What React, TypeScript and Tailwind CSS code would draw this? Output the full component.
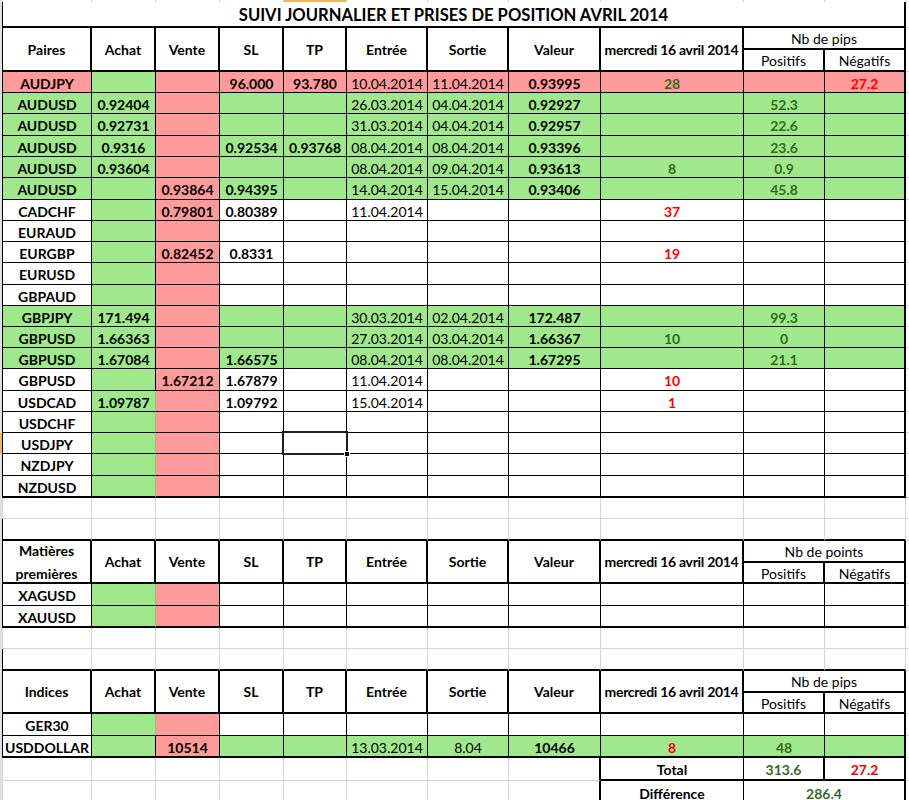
import React from 'react';

const G = 'bg-[#9fe98c]';
const P = 'bg-[#ff9a9a]';
const WCLS = [
  'w-[89px]', 'w-[64px]', 'w-[64px]', 'w-[64px]', 'w-[63px]', 'w-[81px]',
  'w-[81px]', 'w-[92px]', 'w-[143px]', 'w-[81px]', 'w-[81px]',
];

type C = { t?: string; bg?: string; b?: boolean; c?: 'g' | 'r' };
type RowT = { h: string; cells: C[]; light?: boolean; sel?: boolean; thick?: boolean };

const green = 'text-[#356a1c]';
const red = 'text-[#ff0000]';

function mk(
  name: string,
  paireBg: string,
  vals: (string | undefined)[],
  bgs: string[],
  merc?: { t: string; c: 'g' | 'r' },
  pos?: string,
  neg?: string,
): C[] {
  const cells: C[] = [];
  cells.push({ t: name, bg: paireBg, b: true });
  const boldIdx = [true, true, true, true, false, false, true];
  for (let i = 0; i < 7; i++) cells.push({ t: vals[i], bg: bgs[i], b: boldIdx[i] });
  cells.push({ t: merc?.t, bg: bgs[7], b: true, c: merc?.c });
  cells.push({ t: pos, bg: bgs[8], b: true, c: 'g' });
  cells.push({ t: neg, bg: bgs[9], b: true, c: 'r' });
  return cells;
}

const W = 'bg-white';
const allG = [G, P, G, G, G, G, G, G, G, G];
const plain = [G, P, W, W, W, W, W, W, W, W];

const table1: RowT[] = [
  { h: 'h-[21px]', cells: mk('AUDJPY', P, [undefined, undefined, '96.000', '93.780', '10.04.2014', '11.04.2014', '0.93995'], [G, P, P, P, P, P, P, P, P, P], { t: '28', c: 'g' }, undefined, '27.2') },
  { h: 'h-[21px]', cells: mk('AUDUSD', G, ['0.92404', undefined, undefined, undefined, '26.03.2014', '04.04.2014', '0.92927'], allG, undefined, '52.3') },
  { h: 'h-[22px]', cells: mk('AUDUSD', G, ['0.92731', undefined, undefined, undefined, '31.03.2014', '04.04.2014', '0.92957'], allG, undefined, '22.6') },
  { h: 'h-[21px]', cells: mk('AUDUSD', G, ['0.9316', undefined, '0.92534', '0.93768', '08.04.2014', '08.04.2014', '0.93396'], allG, undefined, '23.6') },
  { h: 'h-[21px]', cells: mk('AUDUSD', G, ['0.93604', undefined, undefined, undefined, '08.04.2014', '09.04.2014', '0.93613'], allG, { t: '8', c: 'g' }, '0.9') },
  { h: 'h-[22px]', cells: mk('AUDUSD', G, [undefined, '0.93864', '0.94395', undefined, '14.04.2014', '15.04.2014', '0.93406'], allG, undefined, '45.8') },
  { h: 'h-[21px]', cells: mk('CADCHF', W, [undefined, '0.79801', '0.80389', undefined, '11.04.2014', undefined, undefined], plain, { t: '37', c: 'r' }) },
  { h: 'h-[21px]', cells: mk('EURAUD', W, [], plain) },
  { h: 'h-[21px]', cells: mk('EURGBP', W, [undefined, '0.82452', '0.8331'], plain, { t: '19', c: 'r' }) },
  { h: 'h-[22px]', cells: mk('EURUSD', W, [], plain) },
  { h: 'h-[21px]', cells: mk('GBPAUD', W, [], plain) },
  { h: 'h-[21px]', cells: mk('GBPJPY', G, ['171.494', undefined, undefined, undefined, '30.03.2014', '02.04.2014', '172.487'], allG, undefined, '99.3') },
  { h: 'h-[21px]', cells: mk('GBPUSD', G, ['1.66363', undefined, undefined, undefined, '27.03.2014', '03.04.2014', '1.66367'], allG, { t: '10', c: 'g' }, '0') },
  { h: 'h-[21px]', cells: mk('GBPUSD', G, ['1.67084', undefined, '1.66575', undefined, '08.04.2014', '08.04.2014', '1.67295'], allG, undefined, '21.1') },
  { h: 'h-[22px]', cells: mk('GBPUSD', W, [undefined, '1.67212', '1.67879', undefined, '11.04.2014'], plain, { t: '10', c: 'r' }) },
  { h: 'h-[21px]', light: true, cells: mk('USDCAD', W, ['1.09787', undefined, '1.09792', undefined, '15.04.2014'], plain, { t: '1', c: 'r' }) },
  { h: 'h-[21px]', light: true, cells: mk('USDCHF', W, [], plain) },
  { h: 'h-[21px]', light: true, sel: true, cells: mk('USDJPY', W, [], plain) },
  { h: 'h-[22px]', light: true, cells: mk('NZDJPY', W, [], plain) },
  { h: 'h-[22px]', light: true, thick: true, cells: mk('NZDUSD', W, [], plain) },
];

const table2: RowT[] = [
  { h: 'h-[22px]', light: true, cells: mk('XAGUSD', W, [], plain) },
  { h: 'h-[22px]', light: true, thick: true, cells: mk('XAUUSD', W, [], plain) },
];

const table3: RowT[] = [
  { h: 'h-[22px]', light: true, cells: mk('GER30', W, [], plain) },
  { h: 'h-[22px]', thick: true, cells: mk('USDDOLLAR', W, [undefined, '10514', undefined, undefined, '13.03.2014', '8.04', '10466'], allG, { t: '8', c: 'r' }, '48') },
];

function Gutter({ sel }: { sel?: boolean }) {
  return <div className={`w-[2px] shrink-0 ${sel ? 'bg-[#f2b45c]' : 'bg-[#dde1e6]'}`} />;
}

function DataRow({ row }: { row: RowT }) {
  return (
    <div className={`flex ${row.h}`}>
      <Gutter sel={row.sel} />
      <div className="w-px shrink-0 bg-black" />
      {row.cells.map((c, i) => {
        const rb =
          i === 10
            ? 'border-r-2 border-r-black'
            : i === 1 && row.light
            ? 'border-r border-r-[#7fcf6e]'
            : 'border-r border-r-black';
        const bb = row.thick ? 'border-b-2 border-b-black' : 'border-b border-b-black';
        const col = c.c === 'g' ? green : c.c === 'r' ? red : 'text-black';
        return (
          <div
            key={i}
            className={`${WCLS[i]} shrink-0 box-border flex items-center justify-center whitespace-nowrap pt-[2px] ${rb} ${bb} ${c.bg ?? 'bg-white'} ${col} ${c.b ? 'font-bold' : 'font-normal'}`}
          >
            {c.t}
          </div>
        );
      })}
      <div className="flex-1 border-b border-b-[#d4d4d4]" />
    </div>
  );
}

function GapRow({ h, black }: { h: string; black?: boolean }) {
  return (
    <div className={`flex ${h}`}>
      <Gutter />
      <div className={`w-px shrink-0 ${black ? 'bg-black' : 'bg-[#d4d4d4]'}`} />
      {WCLS.map((w, i) => (
        <div
          key={i}
          className={`${w} shrink-0 box-border border-r border-r-[#d4d4d4] ${black ? 'border-b-2 border-b-black' : 'border-b border-b-[#d4d4d4]'}`}
        />
      ))}
      <div className="flex-1 border-b border-b-[#d4d4d4]" />
    </div>
  );
}

function Header({ first, nb, h, h1, h2 }: { first: React.ReactNode; nb: string; h: string; h1: string; h2: string }) {
  const labels = ['Achat', 'Vente', 'SL', 'TP', 'Entrée', 'Sortie', 'Valeur'];
  return (
    <div className={`flex ${h}`}>
      <Gutter />
      <div className="w-px shrink-0 bg-black" />
      <div className={`${WCLS[0]} shrink-0 box-border flex items-center justify-center text-center font-bold border-r-2 border-r-black border-b-2 border-b-black bg-white`}>
        {first}
      </div>
      {labels.map((l, i) => (
        <div
          key={l}
          className={`${WCLS[i + 1]} shrink-0 box-border flex items-center justify-center font-bold border-r-2 border-r-black border-b-2 border-b-black bg-white`}
        >
          {l}
        </div>
      ))}
      <div className={`${WCLS[8]} shrink-0 box-border flex items-center justify-center whitespace-nowrap font-bold tracking-[-0.3px] border-r-2 border-r-black border-b-2 border-b-black bg-white`}>
        mercredi 16 avril 2014
      </div>
      <div className="w-[162px] shrink-0 flex flex-col">
        <div className={`${h1} box-border flex items-center justify-center pt-[1px] border-r-2 border-r-black border-b-2 border-b-black bg-white`}>
          {nb}
        </div>
        <div className={`flex ${h2}`}>
          <div className="w-[81px] shrink-0 box-border flex items-center justify-center pt-[1px] border-r-2 border-r-black border-b-2 border-b-black bg-white">
            Positifs
          </div>
          <div className="w-[81px] shrink-0 box-border flex items-center justify-center pt-[1px] border-r-2 border-r-black border-b-2 border-b-black bg-white">
            Négatifs
          </div>
        </div>
      </div>
      <div className="flex-1 border-b border-b-[#d4d4d4]" />
    </div>
  );
}

function TotalRow({ h, label, children, diff }: { h: string; label: string; children: React.ReactNode; diff?: boolean }) {
  return (
    <div className={`flex ${h}`}>
      <Gutter />
      <div className="w-px shrink-0 bg-[#d4d4d4]" />
      {WCLS.slice(0, 8).map((w, i) => (
        <div
          key={i}
          className={`${w} shrink-0 box-border border-b border-b-[#d4d4d4] ${i === 7 ? 'border-r-2 border-r-black' : 'border-r border-r-[#d4d4d4]'}`}
        />
      ))}
      <div className={`${WCLS[8]} shrink-0 box-border flex items-center justify-center pt-[2px] font-bold bg-white border-r border-r-black ${diff ? '' : 'border-b-2 border-b-black'}`}>
        {label}
      </div>
      {children}
      <div className="flex-1 border-b border-b-[#d4d4d4]" />
    </div>
  );
}

export default function App() {
  return (
    <div className="relative w-[909px] h-[800px] overflow-hidden bg-white text-[14px] text-black [font-family:Lato,'Liberation_Sans',sans-serif]">
      <div className="flex h-[2px]">
        <div className="w-[3px] shrink-0 bg-[#dde1e6]" />
        {WCLS.map((w, i) => (
          <div key={i} className={`${w} shrink-0 box-border border-r border-r-[#d4d4d4] ${i === 4 ? 'bg-[#f2b45c]' : 'bg-white'}`} />
        ))}
      </div>
      <div className="flex h-[26px]">
        <Gutter />
        <div className="w-px shrink-0 bg-black" />
        <div className="w-[903px] shrink-0 box-border flex items-center justify-center pt-[3px] font-bold text-[16.6px] border-r-2 border-r-black border-b-2 border-b-black bg-white">
          SUIVI JOURNALIER ET PRISES DE POSITION AVRIL 2014
        </div>
        <div className="flex-1 border-b border-b-[#d4d4d4]" />
      </div>

      <Header first="Paires" nb="Nb de pips" h="h-[44px]" h1="h-[22px]" h2="h-[22px]" />
      {table1.map((r, i) => (
        <DataRow key={i} row={r} />
      ))}

      <GapRow h="h-[21px]" />
      <GapRow h="h-[22px]" black />

      <Header
        first={
          <span className="leading-[23px] pt-[1px]">
            Matières
            <br />
            premières
          </span>
        }
        nb="Nb de points"
        h="h-[43px]"
        h1="h-[22px]"
        h2="h-[21px]"
      />
      {table2.map((r, i) => (
        <DataRow key={i} row={r} />
      ))}

      <GapRow h="h-[21px]" />
      <GapRow h="h-[22px]" black />

      <Header first="Indices" nb="Nb de pips" h="h-[43px]" h1="h-[22px]" h2="h-[21px]" />
      {table3.map((r, i) => (
        <DataRow key={i} row={r} />
      ))}

      <TotalRow h="h-[23px]" label="Total">
        <div className={`w-[81px] shrink-0 box-border flex items-center justify-center pt-[2px] font-bold ${green} bg-white border-r-2 border-r-black border-b-2 border-b-black`}>
          313.6
        </div>
        <div className={`w-[81px] shrink-0 box-border flex items-center justify-center pt-[2px] font-bold ${red} bg-white border-r-2 border-r-black border-b-2 border-b-black`}>
          27.2
        </div>
      </TotalRow>
      <TotalRow h="h-[22px]" label="Différence" diff>
        <div className={`w-[162px] shrink-0 box-border flex items-center justify-center pt-[2px] font-bold ${green} bg-white border-r-2 border-r-black`}>
          286.4
        </div>
      </TotalRow>

      <div className="absolute left-[282px] top-[431px] w-[66px] h-[24px] border-2 border-[#1f1f1f] pointer-events-none">
        <div className="absolute -right-[4px] -bottom-[4px] w-[6px] h-[6px] bg-black border border-white" />
      </div>
    </div>
  );
}
